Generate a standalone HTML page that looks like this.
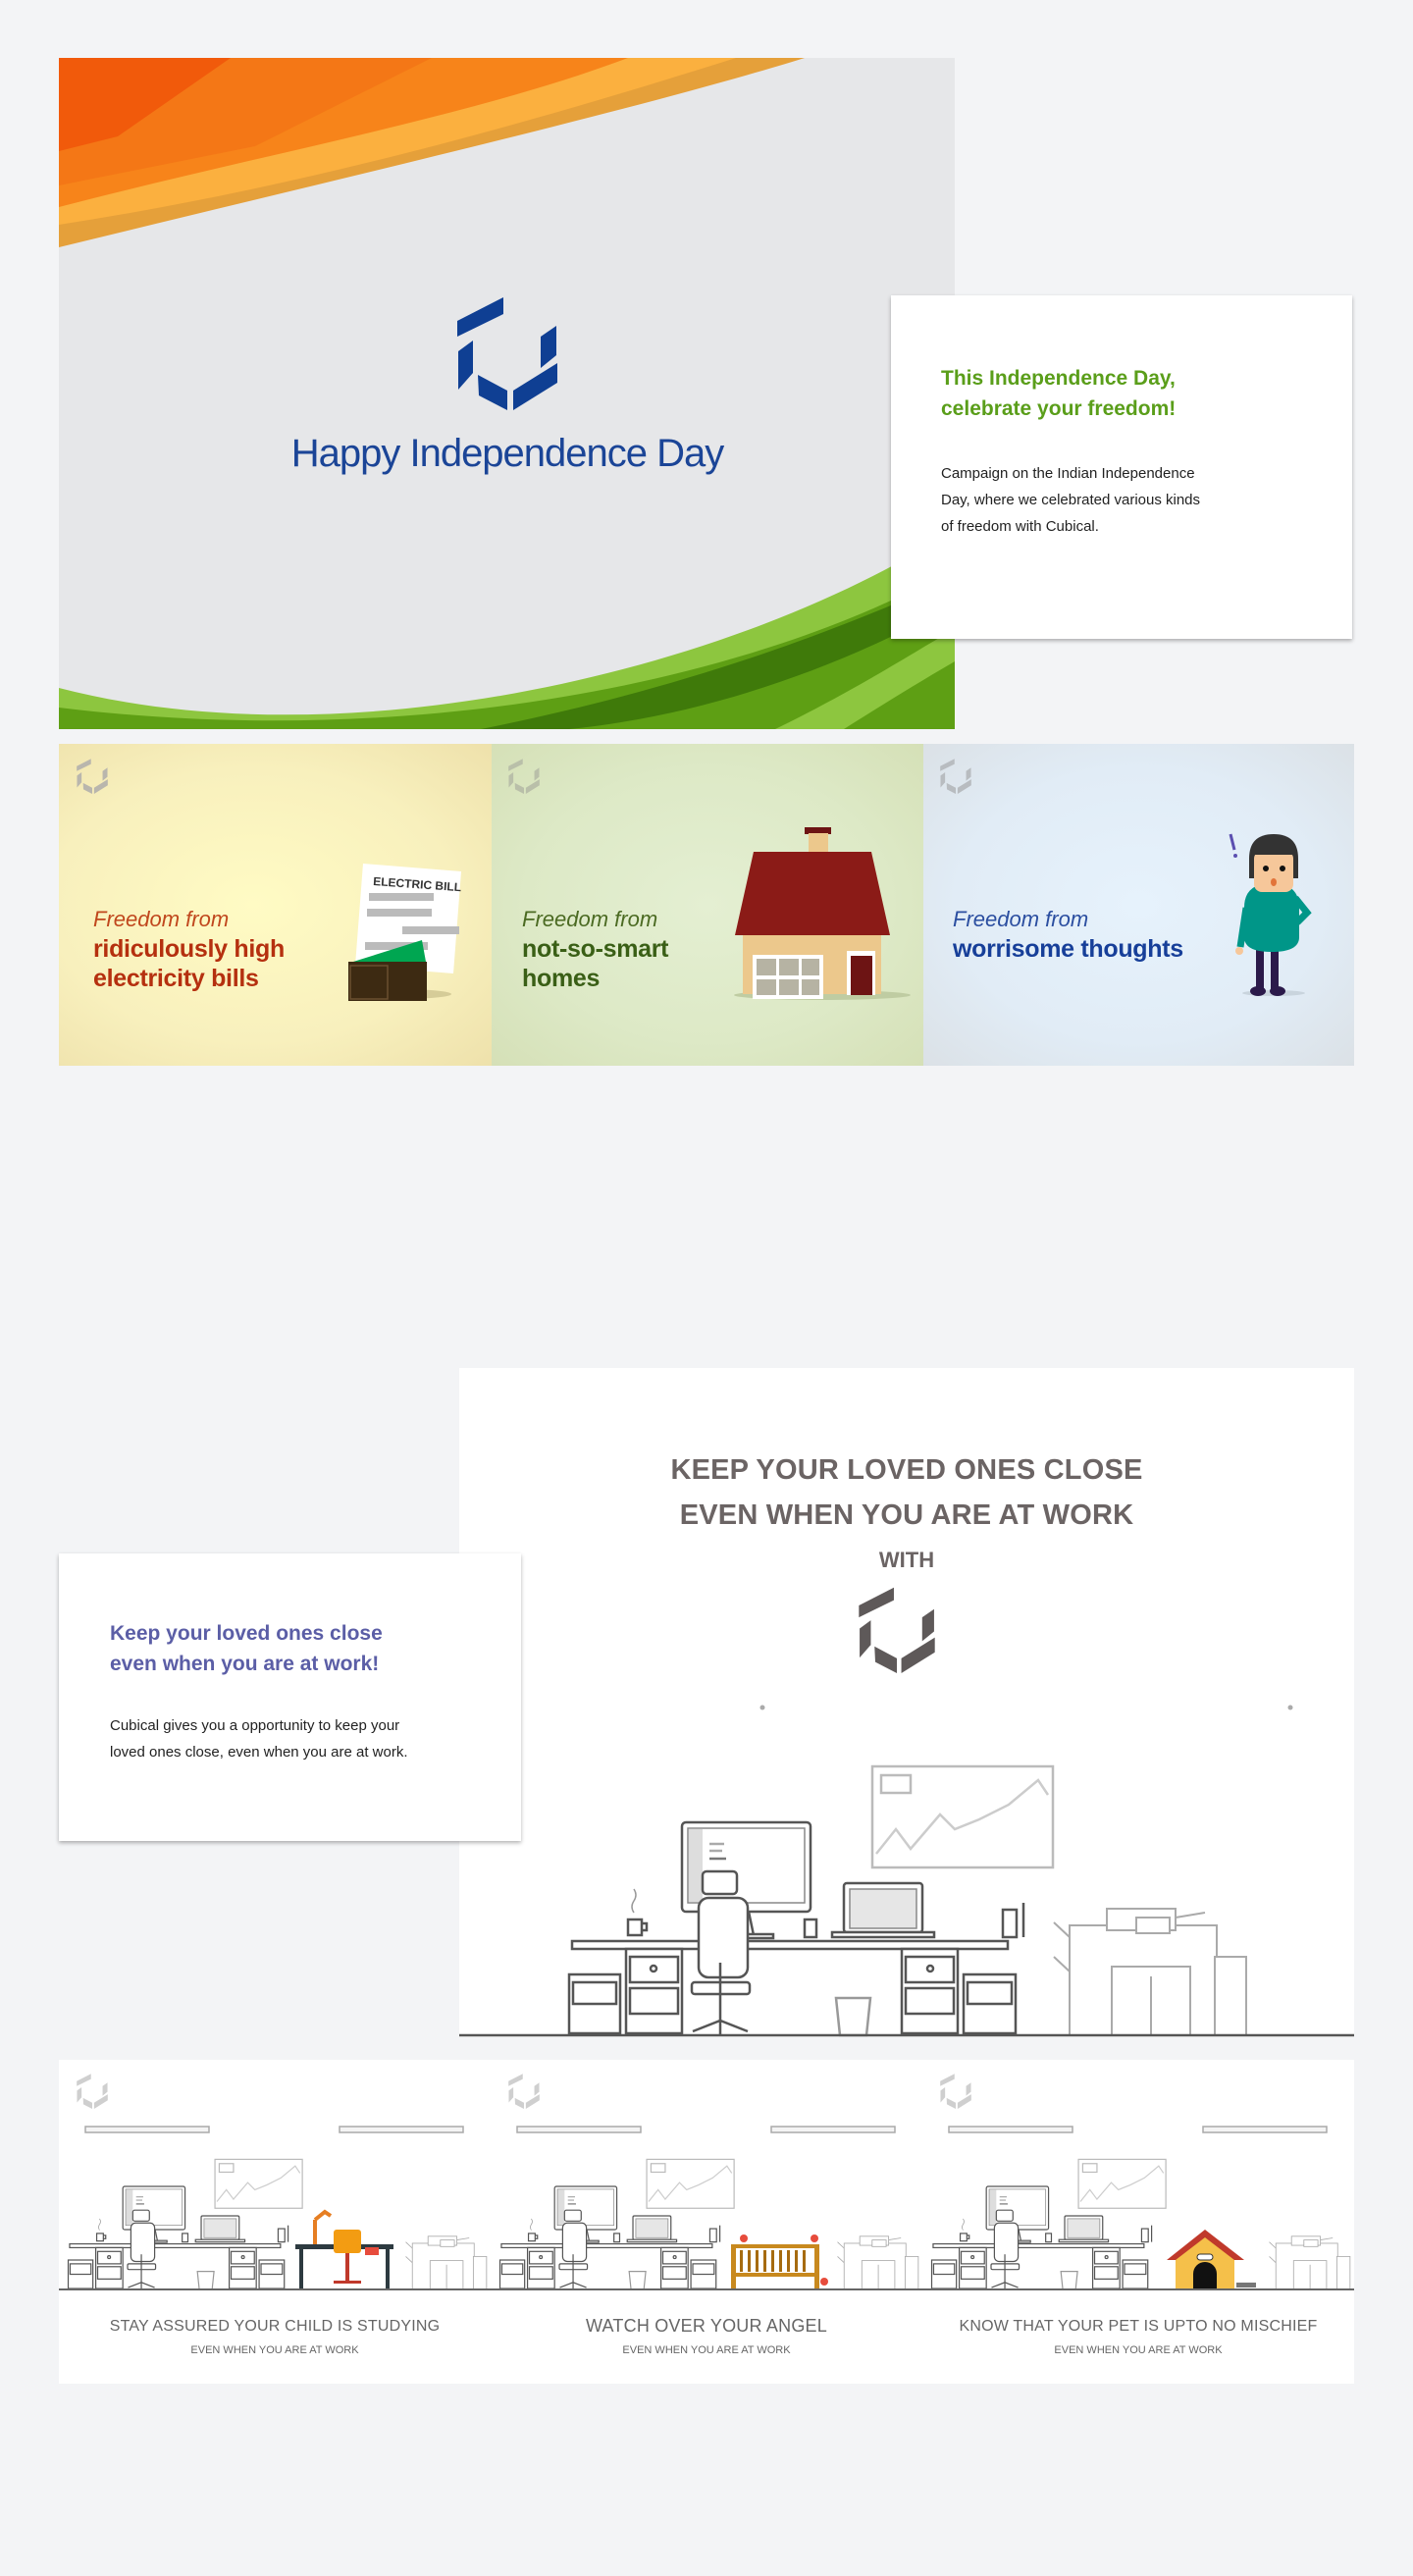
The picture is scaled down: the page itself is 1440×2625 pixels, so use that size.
<!DOCTYPE html>
<html><head><meta charset="utf-8">
<style>
*{margin:0;padding:0;box-sizing:border-box}
body{width:1440px;height:2625px;background:#f3f4f6;position:relative;font-family:"Liberation Sans",sans-serif;overflow:hidden}
.abs{position:absolute}
.card{background:#fff;box-shadow:0 2px 4px rgba(0,0,0,.3)}
.pt{font-size:22px;line-height:30px;position:absolute;white-space:nowrap}
.pt i{font-weight:300;font-style:italic;font-size:22px}
.pt b{font-size:25px;display:block;line-height:30px;letter-spacing:-.3px}
.cap1{position:absolute;width:440px;text-align:center;color:#666;font-size:16px;top:2362px;letter-spacing:.2px}
.cap2{position:absolute;width:440px;text-align:center;color:#666;font-size:11px;top:2389px}
</style></head><body>
<svg width="0" height="0" style="position:absolute">
<defs>
<symbol id="logo" viewBox="6 12 102 116">
<polygon points="6,37 53,13 53,30 6,53"/>
<polygon points="22,57 22,90 7,107 7,68"/>
<polygon points="27,92 57,108 57,128 28,113"/>
<polygon points="63,108 108,80 108,100 63,128"/>
<polygon points="91,53 107,42 107,72 91,85"/>
</symbol>
<g id="desk" fill="#fff" stroke="#555" stroke-width="2.5">
<rect x="421" y="406" width="184" height="103" stroke="#bbb"/>
<rect x="430" y="415" width="30" height="18" stroke="#bbb"/>
<polyline points="425,495 445,470 460,490 490,455 505,470 530,460 560,445 590,420 600,435" fill="none" stroke="#ccc"/>
<rect x="227" y="463" width="131" height="91" rx="4"/>
<rect x="233" y="469" width="119" height="76" stroke="#888" stroke-width="1.5"/>
<rect x="234" y="470" width="14" height="74" fill="#ddd" stroke="none"/>
<line x1="255" y1="485" x2="270" y2="485" stroke="#aaa"/><line x1="255" y1="492" x2="268" y2="492" stroke="#aaa"/><line x1="255" y1="500" x2="272" y2="500" stroke="#777"/>
<line x1="295" y1="554" x2="300" y2="578"/><rect x="270" y="577" width="50" height="4"/>
<rect x="392" y="525" width="80" height="50" rx="3"/><rect x="398" y="531" width="68" height="40" fill="#e6e6e6" stroke="#888" stroke-width="1.5"/>
<rect x="380" y="575" width="104" height="5"/>
<rect x="554" y="552" width="14" height="28"/><line x1="575" y1="545" x2="575" y2="580"/>
<rect x="172" y="562" width="14" height="16"/><path d="M186 566 h5 v7 h-5" fill="none"/>
<path d="M178 555 q-4 -6 0 -12 q4 -6 0 -12" fill="none" stroke="#999" stroke-width="1.5"/>
<rect x="352" y="562" width="12" height="18"/>
<rect x="115" y="584" width="444" height="8"/>
<rect x="112" y="618" width="52" height="60"/><rect x="116" y="626" width="44" height="22"/>
<rect x="170" y="592" width="57" height="86"/><rect x="174" y="600" width="49" height="26"/><rect x="174" y="632" width="49" height="26"/><circle cx="198" cy="612" r="3"/>
<rect x="451" y="592" width="57" height="86"/><rect x="455" y="600" width="49" height="26"/><rect x="455" y="632" width="49" height="26"/><circle cx="480" cy="612" r="3"/>
<rect x="514" y="618" width="53" height="60"/><rect x="518" y="626" width="45" height="22"/>
<rect x="248" y="513" width="35" height="23" rx="4"/>
<rect x="244" y="540" width="50" height="81" rx="10"/>
<rect x="237" y="626" width="59" height="12" rx="3"/>
<line x1="266" y1="606" x2="266" y2="665"/>
<path d="M238 676 L266 665 L294 676 M266 665 L266 679" fill="none"/>
<path d="M384 642 h35 l-4 38 h-27 z" stroke="#999"/>
</g>
<g id="copier" fill="#fff" stroke="#aaa" stroke-width="2">
<rect x="622" y="568" width="150" height="112"/>
<rect x="660" y="551" width="70" height="22"/>
<rect x="690" y="560" width="34" height="16"/>
<rect x="665" y="610" width="80" height="70"/>
<line x1="705" y1="620" x2="705" y2="680"/>
<rect x="770" y="600" width="32" height="80"/>
<line x1="606" y1="565" x2="622" y2="580"/><line x1="606" y1="600" x2="622" y2="615"/>
<line x1="730" y1="560" x2="760" y2="555"/>
</g>
</defs>
</svg>

<!-- HERO -->
<svg class="abs" style="left:60px;top:59px" width="913" height="684" viewBox="0 0 913 684">
<rect width="913" height="684" fill="#e6e7e9"/>
<path d="M0 0 H760 C600 50 300 120 0 193 Z" fill="#e5a03a"/>
<path d="M0 0 H690 C500 60 260 130 0 170 Z" fill="#fbb03f"/>
<path d="M0 0 H580 C420 60 220 95 0 152 Z" fill="#f7841a"/>
<path d="M0 0 H380 L200 90 L0 130 Z" fill="#f47716"/>
<path d="M0 0 H175 L60 80 L0 95 Z" fill="#f15a0b"/>
<path d="M0 684 V642 C300 720 700 620 913 480 V684 Z" fill="#8dc63f"/>
<path d="M0 684 V662 C350 705 700 640 913 520 V684 Z" fill="#5e9f14"/>
<path d="M430 684 C650 640 800 580 913 530 V556 C800 620 660 670 520 684Z" fill="#3f7a0a"/>
<path d="M730 684 C820 640 880 600 913 582 V615 C870 640 830 665 800 684Z" fill="#8dc63f"/>
</svg>
<svg class="abs" style="left:466px;top:302px" width="102" height="116" fill="#0f3f93"><use href="#logo"/></svg>
<div class="abs" style="left:217px;top:440px;width:600px;text-align:center;color:#1b4597;font-size:40px;letter-spacing:-1px;font-weight:300">Happy Independence Day</div>

<div class="card abs" style="left:908px;top:301px;width:470px;height:350px">
<div class="abs" style="left:51px;top:69px;color:#5a9e1a;font-weight:bold;font-size:21px;line-height:31px">This Independence Day,<br>celebrate your freedom!</div>
<div class="abs" style="left:51px;top:168px;color:#222;font-size:15px;line-height:27px">Campaign on the Indian Independence<br>Day, where we celebrated various kinds<br>of freedom with Cubical.</div>
</div>

<!-- PANELS -->
<div class="abs" style="left:60px;top:758px;width:441px;height:328px;background:radial-gradient(ellipse at 45% 50%,#fffbc4 0%,#f8f0bd 60%,#eee1ab 100%)"></div>
<div class="abs" style="left:501px;top:758px;width:440px;height:328px;background:radial-gradient(ellipse at 50% 50%,#e4efd2 0%,#dde9c6 60%,#d5e0b7 100%)"></div>
<div class="abs" style="left:941px;top:758px;width:439px;height:328px;background:radial-gradient(ellipse at 50% 50%,#e6f2fc 0%,#e1ecf6 60%,#dbe1e6 100%)"></div>
<svg class="abs" style="left:78px;top:773px" width="32" height="36" fill="#b9b6ad"><use href="#logo"/></svg>
<svg class="abs" style="left:518px;top:773px" width="32" height="36" fill="#b9bfa9"><use href="#logo"/></svg>
<svg class="abs" style="left:958px;top:773px" width="32" height="36" fill="#b8bcc0"><use href="#logo"/></svg>

<div class="pt" style="left:95px;top:922px;color:#c0471d"><i>Freedom from</i><b style="color:#b5300f">ridiculously high<br>electricity bills</b></div>
<div class="pt" style="left:532px;top:922px;color:#4b6a22"><i>Freedom from</i><b style="color:#3a5f16">not-so-smart<br>homes</b></div>
<div class="pt" style="left:971px;top:922px;color:#2b4ea0"><i>Freedom from</i><b style="color:#173f99">worrisome thoughts</b></div>

<!-- bill + wallet -->
<svg class="abs" style="left:340px;top:840px" width="140" height="190">
<ellipse cx="68" cy="173" rx="52" ry="5" fill="#c8bd8a" opacity=".7"/>
<polygon points="30,40 130,48 122,152 22,144" fill="#fff"/>
<text x="40" y="62" font-size="12" font-weight="bold" fill="#333" transform="rotate(4 40 62)" font-family="Liberation Sans Narrow, Liberation Sans, sans-serif">ELECTRIC BILL</text>
<g fill="#bbb"><rect x="36" y="70" width="66" height="8"/><rect x="34" y="86" width="66" height="8"/><rect x="70" y="104" width="58" height="8"/><rect x="32" y="120" width="64" height="8"/></g>
<polygon points="20,140 90,118 94,140" fill="#00a651"/>
<rect x="15" y="140" width="80" height="40" fill="#3d2a12"/>
<rect x="17" y="144" width="38" height="34" fill="#3d2a12" stroke="#6b5030" stroke-width="1.5"/>
</svg>
<!-- house -->
<svg class="abs" style="left:740px;top:838px" width="200" height="190">
<ellipse cx="98" cy="176" rx="90" ry="5" fill="#bfcca2"/>
<rect x="80" y="5" width="27" height="7" fill="#6d1414"/><rect x="84" y="11" width="20" height="20" fill="#ecc88c"/>
<polygon points="28,30 148,30 167,115 9,115" fill="#8b1b17"/>
<rect x="17" y="115" width="141" height="60" fill="#ecc88c"/>
<rect x="27" y="135" width="72" height="45" fill="#fff"/>
<g fill="#b6b3a3"><rect x="31" y="139" width="20" height="17"/><rect x="54" y="139" width="20" height="17"/><rect x="77" y="139" width="18" height="17"/><rect x="31" y="160" width="20" height="16"/><rect x="54" y="160" width="20" height="16"/><rect x="77" y="160" width="18" height="16"/></g>
<rect x="123" y="131" width="29" height="45" fill="#fff"/><rect x="127" y="136" width="22" height="40" fill="#6d1414"/>
</svg>
<!-- character -->
<svg class="abs" style="left:1240px;top:845px" width="110" height="175">
<ellipse cx="58" cy="167" rx="32" ry="3" fill="#c9d4dd"/>
<path d="M14 5 l4 16" stroke="#5b4fb0" stroke-width="3"/><circle cx="19" cy="27" r="2" fill="#5b4fb0"/>
<rect x="40" y="120" width="8" height="45" fill="#2b1a4a"/><rect x="55" y="120" width="8" height="45" fill="#2b1a4a"/>
<ellipse cx="42" cy="165" rx="8" ry="5" fill="#2b1a4a"/><ellipse cx="62" cy="165" rx="8" ry="5" fill="#2b1a4a"/>
<path d="M28 80 q0 -25 28 -25 q28 0 28 25 v30 q0 15 -28 15 q-28 0 -28 -15z" fill="#009688"/>
<path d="M30 80 l-6 40" stroke="#009688" stroke-width="7"/><circle cx="23" cy="124" r="4" fill="#f6c79a"/>
<path d="M80 70 l12 15 l-10 10" stroke="#009688" stroke-width="7" fill="none"/>
<path d="M33 30 q0 -25 25 -25 q25 0 25 25 v20 h-50z" fill="#333"/>
<rect x="38" y="22" width="40" height="42" rx="8" fill="#f6c79a"/>
<rect x="38" y="14" width="40" height="12" fill="#333"/>
<circle cx="50" cy="40" r="3" fill="#111"/><circle cx="67" cy="40" r="3" fill="#111"/>
<ellipse cx="58" cy="54" rx="3" ry="4" fill="#e2743a"/>
</svg>

<!-- SECTION 2 -->
<div class="abs" style="left:468px;top:1474px;width:912px;height:682px;background:#fff;top:1394px"></div>
<div class="abs" style="left:468px;top:1475px;width:912px;text-align:center;color:#6b6464;font-size:29px;font-weight:bold;line-height:46px;letter-spacing:.2px">KEEP YOUR LOVED ONES CLOSE<br>EVEN WHEN YOU ARE AT WORK</div>
<div class="abs" style="left:468px;top:1577px;width:912px;text-align:center;color:#6b6464;font-size:22px;font-weight:bold">WITH</div>
<svg class="abs" style="left:875px;top:1617px" width="78" height="88" fill="#5e5959"><use href="#logo"/></svg>
<svg class="abs" style="left:468px;top:1394px" width="912" height="684" viewBox="0 0 912 684">
<circle cx="309" cy="346" r="2.5" fill="#aaa"/><circle cx="847" cy="346" r="2.5" fill="#aaa"/>
<use href="#copier"/>
<use href="#desk"/>
<line x1="0" y1="680" x2="912" y2="680" stroke="#555" stroke-width="2.5"/>
</svg>

<div class="card abs" style="left:60px;top:1583px;width:471px;height:293px">
<div class="abs" style="left:52px;top:66px;color:#5b5ea6;font-weight:bold;font-size:21px;line-height:31px">Keep your loved ones close<br>even when you are at work!</div>
<div class="abs" style="left:52px;top:162px;color:#222;font-size:15px;line-height:27px">Cubical gives you a opportunity to keep your<br>loved ones close, even when you are at work.</div>
</div>

<!-- BOTTOM STRIP -->
<div class="abs" style="left:60px;top:2099px;width:1320px;height:330px;background:#fff"></div>
<svg class="abs" style="left:0;top:0" width="1440" height="2625" viewBox="0 0 1440 2625">
<g fill="#cfcfcf">
<use href="#logo" x="78" y="2113" width="32" height="36"/>
<use href="#logo" x="518" y="2113" width="32" height="36"/>
<use href="#logo" x="958" y="2113" width="32" height="36"/>
</g>
<g fill="#f4f4f4" stroke="#aaa" stroke-width="1.5">
<rect x="87" y="2167" width="126" height="6"/><rect x="346" y="2167" width="126" height="6"/>
<rect x="527" y="2167" width="126" height="6"/><rect x="786" y="2167" width="126" height="6"/>
<rect x="967" y="2167" width="126" height="6"/><rect x="1226" y="2167" width="126" height="6"/>
</g>
<g transform="translate(15.3,2003.9) scale(0.484)"><use href="#desk"/></g>
<g transform="translate(455.3,2003.9) scale(0.484)"><use href="#desk"/></g>
<g transform="translate(895.3,2003.9) scale(0.484)"><use href="#desk"/></g>
<g transform="translate(159,2047.4) scale(0.42)"><use href="#copier"/></g>
<g transform="translate(599,2047.4) scale(0.42)"><use href="#copier"/></g>
<g transform="translate(1039,2047.4) scale(0.42)"><use href="#copier"/></g>
<!-- child desk -->
<g>
<rect x="301" y="2287" width="100" height="5" fill="#2d3a40"/>
<rect x="305" y="2292" width="4" height="41" fill="#2d3a40"/><rect x="393" y="2292" width="4" height="41" fill="#2d3a40"/>
<rect x="340" y="2272" width="28" height="24" rx="3" fill="#f39c12"/>
<rect x="352" y="2296" width="4" height="28" fill="#c0392b"/><rect x="340" y="2324" width="28" height="3" fill="#c0392b"/>
<rect x="319" y="2262" width="4" height="25" fill="#e67e22"/><path d="M321 2262 l10 -8 l6 4" stroke="#e67e22" stroke-width="4" fill="none"/>
<rect x="372" y="2290" width="14" height="8" fill="#e74c3c"/>
</g>
<!-- crib -->
<g>
<rect x="745" y="2287" width="90" height="4" fill="#c8891e"/>
<rect x="745" y="2287" width="5" height="46" fill="#c8891e"/><rect x="830" y="2287" width="5" height="46" fill="#c8891e"/>
<rect x="750" y="2316" width="80" height="4" fill="#c8891e"/>
<g fill="#a66b10"><rect x="754" y="2293" width="3" height="22"/><rect x="762" y="2293" width="3" height="22"/><rect x="770" y="2293" width="3" height="22"/><rect x="778" y="2293" width="3" height="22"/><rect x="786" y="2293" width="3" height="22"/><rect x="794" y="2293" width="3" height="22"/><rect x="802" y="2293" width="3" height="22"/><rect x="810" y="2293" width="3" height="22"/><rect x="818" y="2293" width="3" height="22"/></g>
<circle cx="758" cy="2281" r="4" fill="#e74c3c"/><circle cx="830" cy="2281" r="4" fill="#e74c3c"/>
<circle cx="840" cy="2325" r="4" fill="#e74c3c"/>
</g>
<!-- doghouse -->
<g>
<polygon points="1228,2272 1268,2303 1189,2303" fill="#c0392b"/>
<polygon points="1228,2280 1258,2303 1198,2303" fill="#f5c04a"/>
<rect x="1198" y="2303" width="60" height="30" fill="#f5c04a"/>
<path d="M1216 2333 v-16 a12 12 0 0 1 24 0 v16z" fill="#111"/>
<rect x="1220" y="2297" width="16" height="6" rx="3" fill="#fff" stroke="#333"/>
<rect x="1260" y="2326" width="20" height="5" fill="#777"/>
</g>
<line x1="60" y1="2333" x2="1380" y2="2333" stroke="#666" stroke-width="2"/>
</svg>
<div class="cap1" style="left:60px">STAY ASSURED YOUR CHILD IS STUDYING</div>
<div class="cap1" style="left:500px;font-size:18px;top:2360px">WATCH OVER YOUR ANGEL</div>
<div class="cap1" style="left:940px">KNOW THAT YOUR PET IS UPTO NO MISCHIEF</div>
<div class="cap2" style="left:60px">EVEN WHEN YOU ARE AT WORK</div>
<div class="cap2" style="left:500px">EVEN WHEN YOU ARE AT WORK</div>
<div class="cap2" style="left:940px">EVEN WHEN YOU ARE AT WORK</div>
</body></html>
